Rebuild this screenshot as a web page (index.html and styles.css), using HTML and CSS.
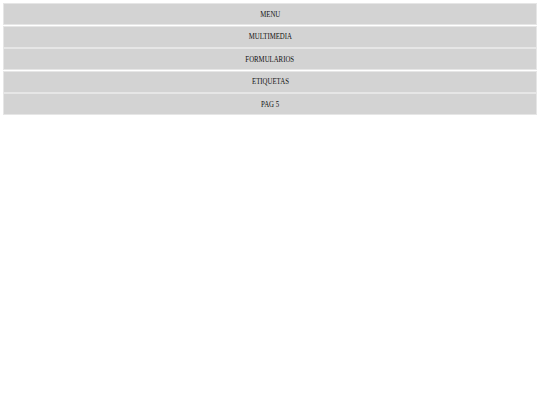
FILE: index.html
```html
<!DOCTYPE html>
<html>
<head>
<meta charset="utf-8">
<link rel="stylesheet" href="styles.css">
</head>
<body>
<nav class="menu">
  <div class="item"><span class="label">MENU</span></div>
  <div class="item"><span class="label">MULTIMEDIA</span></div>
  <div class="item"><span class="label">FORMULARIOS</span></div>
  <div class="item"><span class="label">ETIQUETAS</span></div>
  <div class="item"><span class="label">PAG 5</span></div>
</nav>
</body>
</html>
```
FILE: styles.css
```css
html, body { margin: 0; padding: 0; background: #fff; }
body { padding: 3px; }
.menu { display: flex; flex-direction: column; gap: 0.5px; }
.item {
  background: #d3d3d3;
  border: 1px solid #e6e6e6;
  height: 20px;
  display: flex;
  align-items: center;
  justify-content: center;
  font-family: "Liberation Serif", serif;
  font-size: 8.3px;
  color: #111;
}
.label { display: inline-block; transform: scaleX(0.82); transform-origin: center; }
```
